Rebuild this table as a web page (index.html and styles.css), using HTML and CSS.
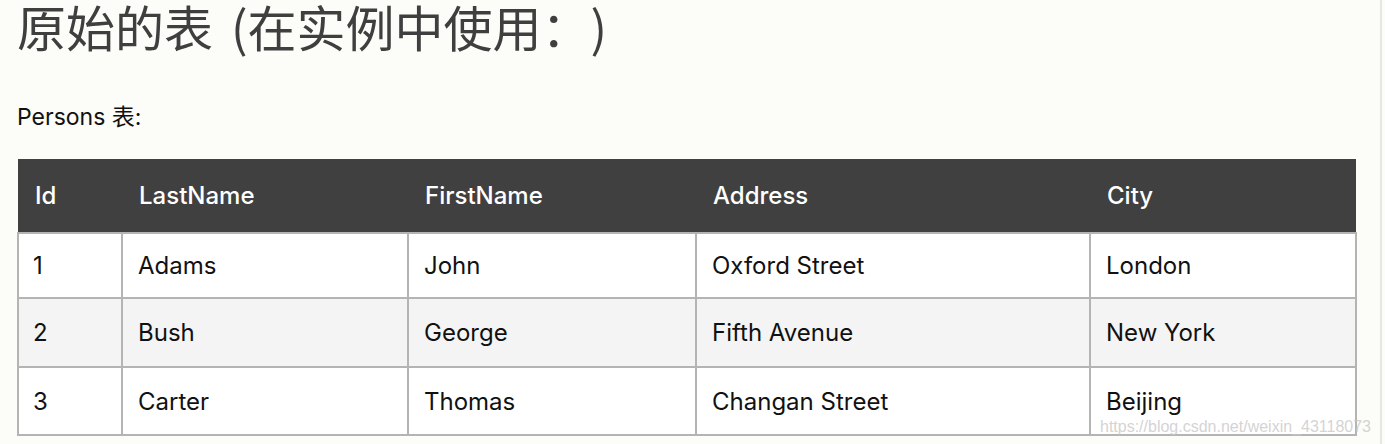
FILE: index.html
```html
<!DOCTYPE html>
<html lang="zh">
<head>
<meta charset="utf-8">
<link rel="stylesheet" href="styles.css">
</head>
<body>
<div class="page">
  <h1 class="title">原始的表 <span class="paren">(在实例中使用：)</span></h1>
  <p class="caption">Persons 表:</p>
  <table class="persons">
    <colgroup>
      <col style="width:104px">
      <col style="width:286px">
      <col style="width:288px">
      <col style="width:394px">
      <col style="width:266px">
    </colgroup>
    <thead>
      <tr><th>Id</th><th>LastName</th><th>FirstName</th><th>Address</th><th>City</th></tr>
    </thead>
    <tbody>
      <tr class="first"><td>1</td><td>Adams</td><td>John</td><td>Oxford Street</td><td>London</td></tr>
      <tr class="alt"><td>2</td><td>Bush</td><td>George</td><td>Fifth Avenue</td><td>New York</td></tr>
      <tr class="last"><td>3</td><td>Carter</td><td>Thomas</td><td>Changan Street</td><td>Beijing</td></tr>
    </tbody>
  </table>
  <div class="watermark">https://blog.csdn.net/weixin_43118073</div>
</div>
</body>
</html>
```
FILE: styles.css
```css
html, body {
  margin: 0;
  padding: 0;
  background: #fcfcf8;
}
body {
  font-family: "Inter", "Noto Sans CJK SC", sans-serif;
  color: #111;
  width: 1385px;
  height: 444px;
  overflow: hidden;
}
.page {
  position: relative;
  height: 444px;
  padding: 0 0 0 17px;
  box-sizing: border-box;
  border-right: 2px solid #e6e6e4;
  width: 1382px;
}
.title {
  margin: 0;
  padding: 0;
  font-family: "Noto Sans CJK SC", sans-serif;
  font-weight: 400;
  font-size: 49px;
  line-height: 52px;
  color: #3f3f3f;
  text-spacing-trim: space-all;
  white-space: nowrap;
}
.paren {
  margin-left: 7px;
}
.caption {
  margin: 51px 0 0 0;
  font-family: "Inter", "Noto Sans CJK SC", sans-serif;
  font-size: 23px;
  line-height: 28px;
  color: #111;
}
.persons {
  margin-top: 28px;
  border-collapse: collapse;
  table-layout: fixed;
  width: 1338px;
  font-size: 24px;
}
.persons th {
  background: #404040;
  color: #fff;
  text-align: left;
  font-weight: 500;
  height: 74px;
  padding: 0 0 0 17px;
  box-sizing: border-box;
  border: none;
}
.persons td {
  background: #fff;
  border: 2px solid #b4b4b4;
  padding: 0 0 0 15px;
  height: 66px;
  box-sizing: border-box;
}
.persons tr.first td { height: 65px; }
.persons tr.alt td { background: #f4f4f4; height: 69px; }
.persons tr.last td { height: 68px; }
.persons td:first-child { padding-left: 14px; }
.watermark {
  position: absolute;
  right: 9px;
  bottom: 8px;
  font-family: "Liberation Sans", sans-serif;
  font-size: 16px;
  color: rgba(200, 200, 200, 0.8);
}
```
